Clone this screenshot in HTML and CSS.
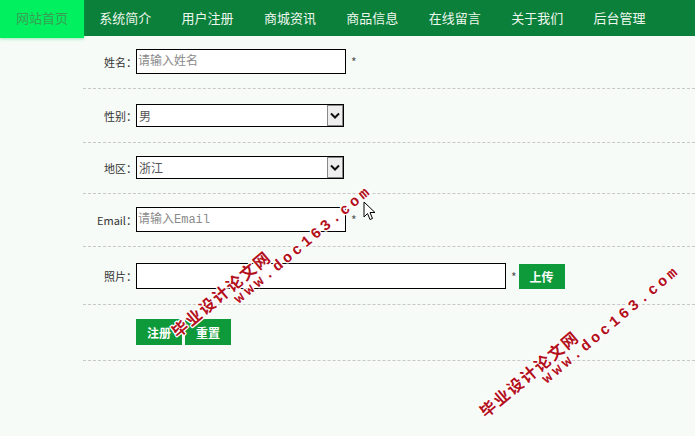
FILE: index.html
```html
<!DOCTYPE html>
<html lang="zh-CN">
<head>
    <meta charset="UTF-8">
    <title>用户注册</title>
    <link rel="stylesheet" href="styles.css">
</head>
<body>
    <div class="nav">
        <a class="active" href="#">网站首页</a>
        <a href="#">系统简介</a>
        <a href="#">用户注册</a>
        <a href="#">商城资讯</a>
        <a href="#">商品信息</a>
        <a href="#">在线留言</a>
        <a href="#">关于我们</a>
        <a href="#">后台管理</a>
    </div>

    <form class="reg">
        <div class="row">
            <label class="lbl">姓名：</label>
            <input class="txt" type="text" placeholder="请输入姓名">
            <span class="req">*</span>
        </div>
        <div class="row row-sel">
            <label class="lbl">性别：</label>
            <div class="select">
                <select><option>男</option><option>女</option></select>
                <span class="arrow"><svg width="10" height="7" viewBox="0 0 10 7"><path d="M1 1.5 L5 5.5 L9 1.5" fill="none" stroke="#111" stroke-width="2"/></svg></span>
            </div>
        </div>
        <div class="row row-sel2">
            <label class="lbl">地区：</label>
            <div class="select">
                <select><option>浙江</option></select>
                <span class="arrow"><svg width="10" height="7" viewBox="0 0 10 7"><path d="M1 1.5 L5 5.5 L9 1.5" fill="none" stroke="#111" stroke-width="2"/></svg></span>
            </div>
        </div>
        <div class="row">
            <label class="lbl">Email：</label>
            <input class="txt" type="text" placeholder="请输入Email">
            <span class="req">*</span>
        </div>
        <div class="row row-photo">
            <label class="lbl">照片：</label>
            <input class="txt wide" type="text">
            <span class="req">*</span>
            <button type="button" class="btn">上传</button>
        </div>
        <div class="row row-btns">
            <span class="lbl"></span>
            <button type="button" class="btn">注册</button>
            <button type="button" class="btn">重置</button>
        </div>
    </form>

    <!-- watermark overlays -->
    <div class="mark mark-1">
        <div class="mark-cn">毕业设计论文网</div>
        <div class="mark-en">www.doc163.com</div>
    </div>
    <div class="mark mark-2">
        <div class="mark-cn">毕业设计论文网</div>
        <div class="mark-en">www.doc163.com</div>
    </div>

    <svg class="cursor" width="13" height="20" viewBox="0 0 13 20">
        <path d="M1 1 L1 16 L4.5 12.5 L7 18.5 L9.5 17.5 L7 11.5 L12 11.5 Z" fill="#fff" stroke="#000" stroke-width="1"/>
    </svg>
</body>
</html>
```

FILE: styles.css
```css
body {
    margin: 0;
    background-color: #f7fbf8;
    font-family: "Noto Sans CJK SC", "Liberation Sans", sans-serif;
    font-size: 12px;
    color: #333;
}
.nav {
    display: flex;
    height: 36px;
    background-color: #0a803a;
}
.nav a {
    width: 82.4px;
    flex: none;
    text-align: center;
    line-height: 36px;
    font-size: 13px;
    color: #eef7ee;
    text-decoration: none;
}
.nav a.active {
    width: 84px;
    height: 38px;
    background-color: #00f060;
    color: #3a9f55;
    box-shadow: 0 1px 3px rgba(0,200,80,0.4);
}
.reg {
    margin: 0 0 0 83px;
}
.row {
    display: flex;
    align-items: center;
    padding: 13px 0 14px;
    border-bottom: 1px dashed #c8c8c8;
}
.row-sel { padding: 15px 0; }
.row-sel2 { padding: 13px 0 14px; }
.row-photo { padding: 16px 0 15px; }
.row-btns { padding: 14px 0 15px; }
.lbl {
    width: 54px;
    margin-right: -1px;
    text-align: right;
    font-size: 11px;
    color: #333;
    flex: none;
}
.txt {
    box-sizing: border-box;
    width: 210px;
    height: 25px;
    margin: 0;
    padding: 0 1px;
    border: 1px solid #000;
    background: #fff;
    font-family: "Liberation Mono", "Noto Sans CJK SC", monospace;
    font-size: 12px;
    color: #333;
}
.txt::placeholder {
    color: #8a8a8a;
}
.txt.wide {
    width: 370px;
    height: 26px;
}
.req {
    margin-left: 5px;
    color: #555;
}
.select {
    box-sizing: border-box;
    display: flex;
    width: 208px;
    height: 23px;
    border: 1px solid #000;
    background: #fff;
}
.select select {
    flex: 1;
    min-width: 0;
    border: none;
    padding: 0 2px;
    background: transparent;
    appearance: none;
    -webkit-appearance: none;
    font-family: "Noto Sans CJK SC", sans-serif;
    font-size: 12px;
    color: #555;
    outline: none;
}
.arrow {
    box-sizing: border-box;
    width: 16px;
    display: flex;
    align-items: center;
    justify-content: center;
    background: #eeeeee;
    border: 1px solid #888;
}
.btn {
    box-sizing: border-box;
    width: 46px;
    height: 25px;
    margin-left: 2px;
    padding: 0;
    border: none;
    background-color: #0e9a3a;
    color: #fff;
    font-family: "Noto Sans CJK SC", sans-serif;
    font-size: 12px;
    font-weight: bold;
}
.row-btns .btn {
    margin: 0 3px 0 0;
    height: 26px;
}
.mark {
    position: absolute;
    transform: rotate(-40deg);
    transform-origin: 0 0;
    color: #b3101c;
    font-weight: bold;
    white-space: nowrap;
    text-shadow: -1px 0 #fff, 1px 0 #fff, 0 -1px #fff, 0 1px #fff, 1px 1px #fff, -1px -1px #fff, 1px -1px #fff, -1px 1px #fff;
}
.mark-1 { left: 168px; top: 327px; }
.mark-2 { left: 476px; top: 407px; }
.mark-cn {
    font-size: 16px;
    line-height: 17px;
    letter-spacing: 1.7px;
}
.mark-en {
    padding-left: 69px;
    font-family: "Liberation Mono", monospace;
    font-size: 15px;
    line-height: 15px;
    letter-spacing: 3.5px;
}
.cursor {
    position: absolute;
    left: 363px;
    top: 201px;
}
```
